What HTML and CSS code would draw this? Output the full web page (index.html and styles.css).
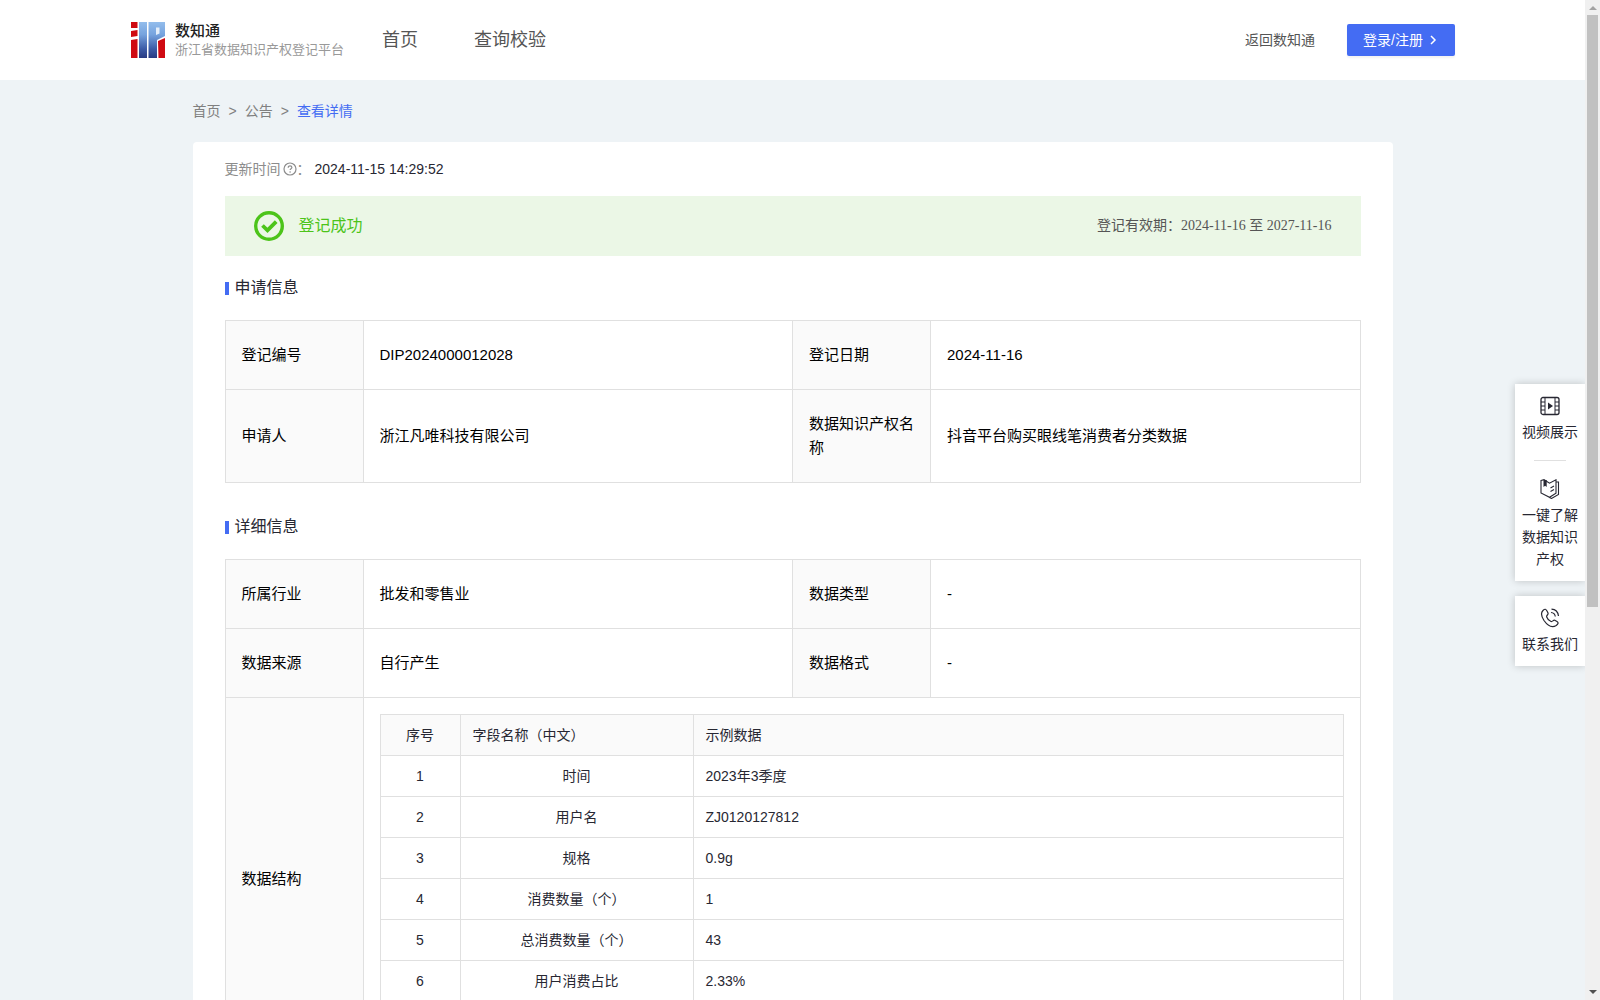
FILE: index.html
```
<!DOCTYPE html>
<html lang="zh-CN">
<head>
  <meta charset="UTF-8" />
  <meta name="viewport" content="width=device-width, initial-scale=1" />
  <title>浙江省数据知识产权登记平台</title>
  <link rel="stylesheet" href="styles.css">
</head>

<body>
  <div class="window">
    <div class="page">

      <!-- Header -->
      <header class="header">
        <a class="brand" href="#">
          <svg class="logo" viewBox="0 0 34 36" aria-hidden="true">
            <defs>
              <linearGradient id="blue" gradientUnits="userSpaceOnUse" x1="0" y1="0" x2="0" y2="36">
                <stop offset="0" stop-color="#93bdec" />
                <stop offset="0.35" stop-color="#76a3de" />
                <stop offset="0.75" stop-color="#3c5ba6" />
                <stop offset="1" stop-color="#283a82" />
              </linearGradient>
            </defs>
            <path fill="#cf0a12" d="M0 0h6.500v6H0zM0 9l6.500-1v6L0 15zM0 18l6.500-1v19H0zM27 19l7-3v20h-6.500z" />
            <path fill="url(#blue)" d="M8 0h8v36H8z" />
            <path fill="url(#blue)" d="M17.500 0H34v14l-8 4v18h-8.500z" />
            <path fill="#e4eefa" d="M25 5.500h3.500v6L25 13z" />
          </svg>
          <span class="brand-text">
            <strong class="brand-name">数知通</strong>
            <span class="brand-sub">浙江省数据知识产权登记平台</span>
          </span>
        </a>
        <nav class="nav">
          <a href="#">首页</a>
          <a href="#">查询校验</a>
        </nav>
        <a class="back" href="#">返回数知通</a>
        <button class="login" type="button">
          登录/注册
          <svg width="12" height="12" viewBox="0 0 12 12" aria-hidden="true"><path d="M4 2l4 4-4 4" fill="none" stroke="currentColor" stroke-width="1.5" /></svg>
        </button>
      </header>

      <main class="main">
        <nav class="breadcrumb">
          <a href="#">首页</a>
          <span>&gt;</span>
          <a href="#">公告</a>
          <span>&gt;</span>
          <a class="current" href="#">查看详情</a>
        </nav>

        <div class="card">
          <div class="update">
            <span class="update-label">更新时间<svg width="14" height="14" viewBox="0 0 14 14" aria-hidden="true"><circle cx="7" cy="7" r="6" fill="none" stroke="currentColor" stroke-width="1.2" /><path d="M5.2 5.7c0-2.5 3.7-2.3 3.7-.2 0 1.2-1.8 1.3-1.8 2.6" fill="none" stroke="currentColor" stroke-width="1.2" /><circle cx="7.1" cy="10" r=".8" fill="currentColor" /></svg>：</span>
            <span>2024-11-15 14:29:52</span>
          </div>

          <!-- Status banner -->
          <div class="banner">
            <svg width="30" height="30" viewBox="0 0 30 30" aria-hidden="true">
              <circle cx="15" cy="15" r="13.3" fill="none" stroke="currentColor" stroke-width="3.4" />
              <path d="M8.5 14.5l5 4.8 8.7-8.6" fill="none" stroke="currentColor" stroke-width="3.8" />
            </svg>
            <span class="banner-title">登记成功</span>
            <span class="banner-date">登记有效期：2024-11-16 至 2027-11-16</span>
          </div>

          <h2 class="section-title">申请信息</h2>
          <table class="info">
            <colgroup><col class="col-label"><col><col class="col-label"><col></colgroup>
            <tr>
              <th>登记编号</th><td>DIP2024000012028</td>
              <th>登记日期</th><td>2024-11-16</td>
            </tr>
            <tr>
              <th>申请人</th><td>浙江凡唯科技有限公司</td>
              <th>数据知识产权名称</th><td>抖音平台购买眼线笔消费者分类数据</td>
            </tr>
          </table>

          <h2 class="section-title detail-title">详细信息</h2>
          <table class="info">
            <colgroup><col class="col-label"><col><col class="col-label"><col></colgroup>
            <tr>
              <th>所属行业</th><td>批发和零售业</td>
              <th>数据类型</th><td>-</td>
            </tr>
            <tr>
              <th>数据来源</th><td>自行产生</td>
              <th>数据格式</th><td>-</td>
            </tr>
            <tr>
              <th>数据结构</th>
              <td class="nested" colspan="3">
                <table class="fields">
                  <colgroup><col class="col-index"><col class="col-name"><col></colgroup>
                  <thead>
                    <tr><th>序号</th><th>字段名称（中文）</th><th>示例数据</th></tr>
                  </thead>
                  <tbody>
                    <tr><td>1</td><td>时间</td><td>2023年3季度</td></tr>
                    <tr><td>2</td><td>用户名</td><td>ZJ0120127812</td></tr>
                    <tr><td>3</td><td>规格</td><td>0.9g</td></tr>
                    <tr><td>4</td><td>消费数量（个）</td><td>1</td></tr>
                    <tr><td>5</td><td>总消费数量（个）</td><td>43</td></tr>
                    <tr><td>6</td><td>用户消费占比</td><td>2.33%</td></tr>
                    <tr><td></td><td></td><td></td></tr>
                  </tbody>
                </table>
              </td>
            </tr>
          </table>
        </div>
      </main>

      <!-- Floating side menu -->
      <aside class="side">
        <div class="side-box">
          <a class="side-item" href="#">
            <svg width="20" height="20" viewBox="0 0 20 20" fill="none" stroke="currentColor" aria-hidden="true">
              <rect x="1" y="1.5" width="18" height="17" rx="2" stroke-width="1.3" />
              <path d="M5 1.5v17M15 1.5v17M1 6h4M1 10h4M1 14h4M15 6h4M15 10h4M15 14h4" />
              <path d="M8 6.500v7l5-3.500z" fill="currentColor" stroke="none" />
            </svg>
            视频展示
          </a>
          <hr class="side-line">
          <a class="side-item" href="#">
            <svg width="20" height="20" viewBox="0 0 20 20" fill="none" stroke="currentColor" stroke-width="1.1" aria-hidden="true">
              <path d="M1 1.500l3-.8 5.500 3.500L16 .8v13.500l-6.500 4L1 14zM16 3h2.500v12.500l-7 4-2-1M10.500 9l3.500-2M10.500 12.500l3.500-2" />
              <path d="M3.500 1h3.200v7L5.100 6.700 3.500 8z" fill="currentColor" stroke="none" />
            </svg>
            一键了解数据知识产权
          </a>
        </div>
        <div class="side-box">
          <a class="side-item" href="#">
            <svg width="20" height="20" viewBox="0 0 20 20" fill="none" stroke="currentColor" stroke-width="1.2" aria-hidden="true">
              <path d="M3 2.500C5 .5 6 1 7 3l1 2c.7 1.700-2 2.300-1.300 4 .8 2.200 2.300 3.800 4.300 4.500 1.600.5 2.200-1.800 3.800-1.200l2.200 1.200c1.800 1.200 1.200 2.500-.8 4C12 20 7.500 17.500 4 12.500 1 8 .5 5 3 2.500z" />
              <path d="M11 4.500c2.700.3 4 1.800 4.300 4M11.500 1.200c4 .2 6.500 2.800 7 6.800" />
            </svg>
            联系我们
          </a>
        </div>
      </aside>
    </div>

    <div class="scrollbar" aria-hidden="true">
      <span class="arrow-up"></span>
      <div class="track"><div class="thumb"></div></div>
      <span class="arrow-down"></span>
    </div>
  </div>
</body>
</html>
```
FILE: styles.css
```
:root {
  --primary: #446cf3;
  --text: #272732;
  --border: #e0e0e0;
  --green: #4cc41a;
}

* { box-sizing: border-box; margin: 0; padding: 0; }
body {
  font-family: "Liberation Sans", "Noto Sans CJK SC", sans-serif;
  font-size: 14px;
  line-height: 22px;
  color: var(--text);
}
a { color: inherit; text-decoration: none; }

/* Window: page + scrollbar */
.window {
  display: grid;
  grid-template-columns: minmax(0, 1fr) 15px;
  height: 100vh;
  overflow: hidden;
}
.page {
  position: relative;
  background: #eef3f6;
  overflow: hidden;
}

/* Header */
.header {
  display: flex; align-items: center;
  height: 80px;
  padding: 0 130px;
  background: #fff;
}
.brand { display: flex; align-items: center; gap: 9px; }
.logo { width: 36px; height: 36px; }
.brand-text { display: flex; flex-direction: column; }
.brand-name {
  font-size: 15px; line-height: 20px; font-weight: 500; color: #222;
}
.brand-sub {
  font-size: 13px; line-height: 18px; color: #999;
}
.nav {
  display: flex; gap: 56px;
  flex: 1;
  margin-left: 38px;
  font-size: 18px; color: #555;
}
.back { margin-right: 32px; color: #555; }
.login {
  display: flex; align-items: center; gap: 4px;
  height: 32px;
  padding: 0 16px;
  border: 0; border-radius: 2px;
  background: var(--primary); color: #fff;
  box-shadow: 0 2px 2px rgba(0,0,0,0.05);
  font: inherit;
  cursor: pointer;
}

/* Breadcrumb */
.main { max-width: 1200px; margin: 0 auto; }
.breadcrumb {
  display: flex; gap: 8px;
  padding: 20px 0;
  color: #808080;
}
.breadcrumb .current { color: var(--primary); }

/* Card */
.card {
  padding: 16px 32px;
  background: #fff;
  border-radius: 4px;
}
.update { display: flex; gap: 4px; }
.update-label { display: flex; align-items: center; color: #8c8c8c; }
.update-label svg { margin-left: 2px; }
.banner {
  display: flex; align-items: center; gap: 15px;
  height: 60px;
  margin-top: 16px;
  padding: 0 29px;
  background: #ebf7e6; color: var(--green);
}
.banner-title { flex: 1; font-size: 16px; }
.banner-date {
  font-family: "Liberation Serif", "Noto Sans CJK SC", serif;
  color: #555;
}

.section-title {
  display: flex; align-items: center; gap: 6px;
  margin: 20px 0;
  font-size: 16px; line-height: 24px; font-weight: 400;
}
.section-title::before {
  content: "";
  width: 4px; height: 13px;
  background: var(--primary);
}
.detail-title { margin-top: 32px; }

/* Info tables */
table {
  width: 100%;
  border-collapse: collapse;
  table-layout: fixed;
}
th, td {
  border: 1px solid var(--border);
  font-weight: 400; text-align: left;
}
.col-label { width: 138px; }
.info { font-size: 15px; line-height: 24px; color: #000; }
.info th, .info td { padding: 22px 16px; }
.info th { background: #fafafa; }
.info .nested { padding: 16px; }

.fields { font-size: 14px; line-height: 24px; color: var(--text); }
.fields tr { height: 41px; }
.info .fields th, .info .fields td { padding: 8px 12px; }
.col-index { width: 80px; }
.col-name { width: 233px; }
.fields th:first-child,
.fields td:first-child,
.fields td:nth-child(2) { text-align: center; }

/* Floating side menu */
.side {
  position: absolute; right: 0; top: 384px;
  width: 70px;
  display: flex; flex-direction: column; gap: 15px;
}
.side-box {
  padding: 12px 6px 11px;
  background: #fff;
  box-shadow: 0 0 8px rgba(0,0,0,0.2);
}
.side-item {
  display: flex; flex-direction: column; align-items: center; gap: 5px;
  text-align: center;
}
.side-line {
  width: 32px;
  margin: 17px auto 18px;
  border: 0; border-top: 1px solid var(--border);
}

/* Scrollbar */
.scrollbar {
  display: flex; flex-direction: column; align-items: center;
  padding: 6px 0;
  background: #f0f0f0;
}
.arrow-up, .arrow-down {
  border: 4px solid transparent;
}
.arrow-up { border-top: 0; border-bottom-color: #a3a3a3; }
.arrow-down { border-bottom: 0; border-top-color: #505050; }
.track { flex: 1; width: 11px; padding: 5px 0; }
.thumb { height: 61%; background: #c1c1c1; }
```
